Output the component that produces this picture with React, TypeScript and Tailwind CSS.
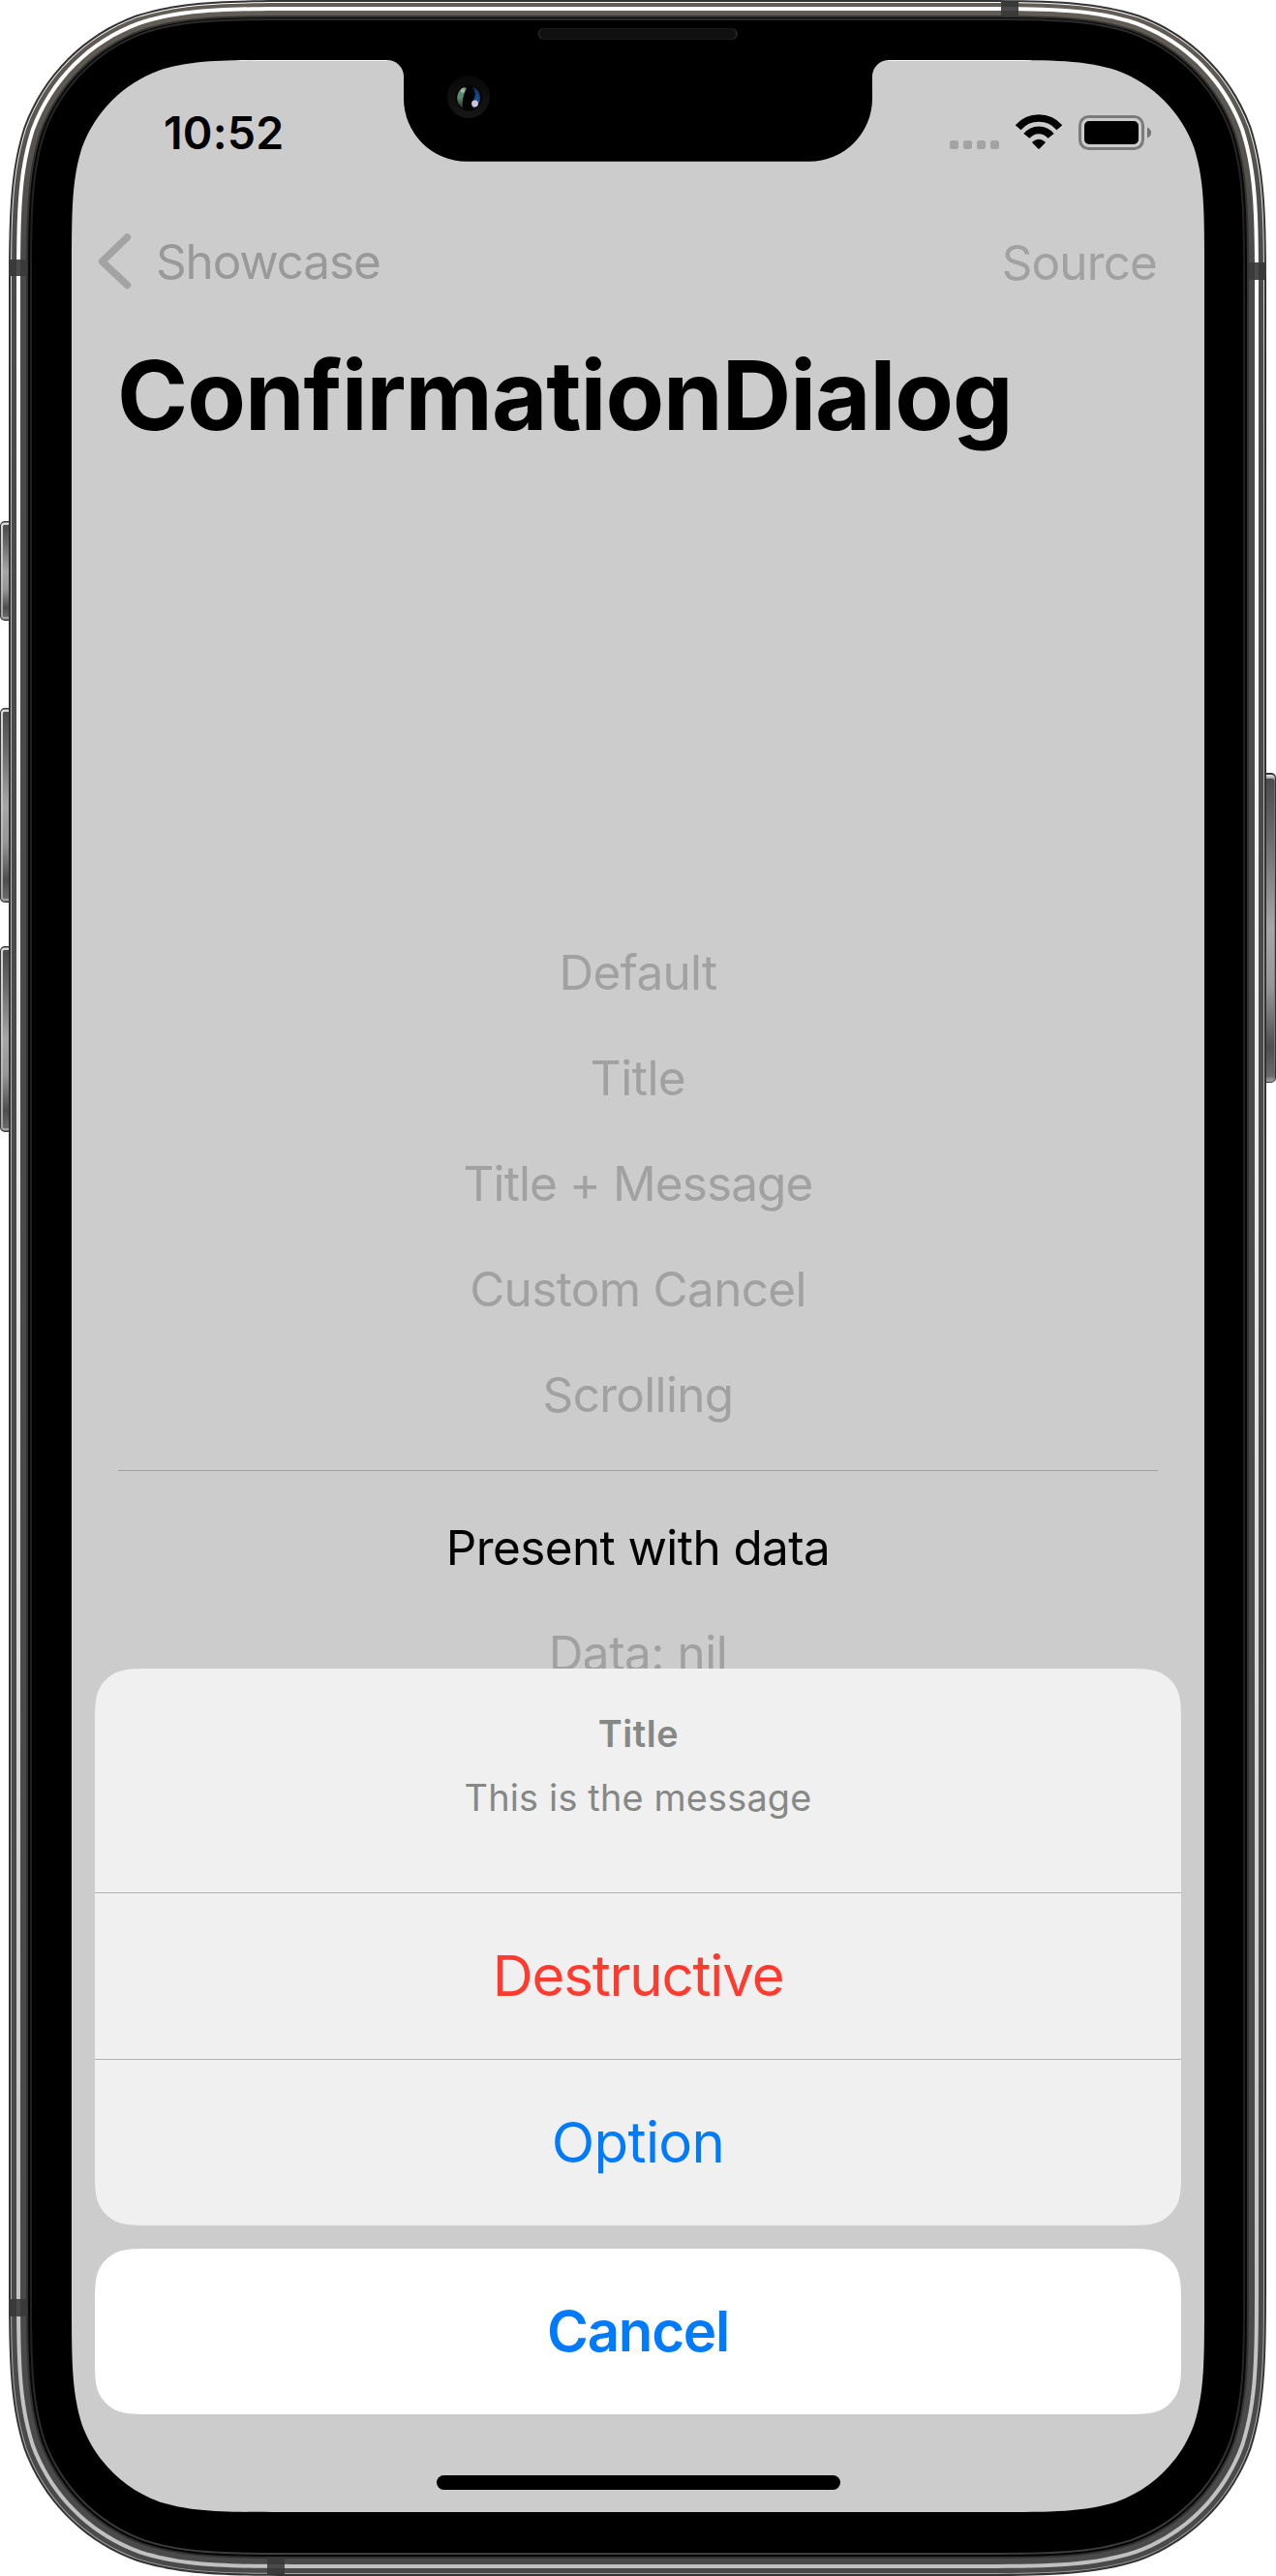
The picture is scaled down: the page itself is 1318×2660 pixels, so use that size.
import React from "react";

/** Rounded rectangle with continuous (iOS style) corners. */
function squircle(x: number, y: number, w: number, h: number, r: number): string {
  const R = x + w;
  const B = y + h;
  const k = [1.528665, 1.08849296, 0.86840694, 0.63149379, 0.37282383, 0.16905956, 0.07491139].map((v) => v * r);
  const [a, b, c, d, e, f, g] = k;
  return [
    `M${x + a} ${y}`,
    `L${R - a} ${y}`,
    `C${R - b} ${y} ${R - c} ${y} ${R - d} ${y + g}`,
    `C${R - e} ${y + f} ${R - f} ${y + e} ${R - g} ${y + d}`,
    `C${R} ${y + c} ${R} ${y + b} ${R} ${y + a}`,
    `L${R} ${B - a}`,
    `C${R} ${B - b} ${R} ${B - c} ${R - g} ${B - d}`,
    `C${R - f} ${B - e} ${R - e} ${B - f} ${R - d} ${B - g}`,
    `C${R - c} ${B} ${R - b} ${B} ${R - a} ${B}`,
    `L${x + a} ${B}`,
    `C${x + b} ${B} ${x + c} ${B} ${x + d} ${B - g}`,
    `C${x + e} ${B - f} ${x + f} ${B - e} ${x + g} ${B - d}`,
    `C${x} ${B - c} ${x} ${B - b} ${x} ${B - a}`,
    `L${x} ${y + a}`,
    `C${x} ${y + b} ${x} ${y + c} ${x + g} ${y + d}`,
    `C${x + f} ${y + e} ${x + e} ${y + f} ${x + d} ${y + g}`,
    `C${x + c} ${y} ${x + b} ${y} ${x + a} ${y}Z`,
  ].join(" ");
}

/** Metal bands from the outside in: side, top and bottom inset plus fill. */
const bands: [number, number, number, string][] = [
  [0, 0, 0, "#333333"],
  [2, 2, 2, "url(#rim)"],
  [3, 3, 3, "url(#metal)"],
  [8, 7, 8, "url(#shine)"],
  [12, 11, 12, "url(#metal)"],
  [18, 16, 18, "#333231"],
  [20, 18, 20, "#060606"],
  [22, 19, 22, "url(#lip)"],
  [24, 21, 24, "#000000"],
];

function Frame() {
  return (
    <svg className="absolute inset-0" width="1318" height="2660" viewBox="0 0 1318 2660" aria-hidden="true">
      <defs>
        <linearGradient id="metal" gradientUnits="userSpaceOnUse" x1="0" y1="0" x2="0" y2="2660">
          <stop offset="0" stopColor="#625d55" />
          <stop offset="0.04" stopColor="#5b5751" />
          <stop offset="0.1" stopColor="#4a4a4a" />
          <stop offset="1" stopColor="#4a4a4a" />
        </linearGradient>
        <linearGradient id="shine" gradientUnits="userSpaceOnUse" x1="0" y1="0" x2="0" y2="2660">
          <stop offset="0" stopColor="#ffffff" />
          <stop offset="0.15" stopColor="#fafafa" />
          <stop offset="0.45" stopColor="#e9e9e9" />
          <stop offset="0.88" stopColor="#c6c6c6" />
          <stop offset="1" stopColor="#c0c0c0" />
        </linearGradient>
        <linearGradient id="rim" gradientUnits="userSpaceOnUse" x1="0" y1="0" x2="0" y2="2660">
          <stop offset="0" stopColor="#ffffff" />
          <stop offset="0.1" stopColor="#d4d8d6" />
          <stop offset="0.2" stopColor="#b4b4b4" />
          <stop offset="1" stopColor="#a4a8a6" />
        </linearGradient>
        <linearGradient id="lip" gradientUnits="userSpaceOnUse" x1="0" y1="0" x2="0" y2="2660">
          <stop offset="0" stopColor="#2c2c2c" />
          <stop offset="0.1" stopColor="#1f1f1f" />
          <stop offset="0.9" stopColor="#1f1f1f" />
          <stop offset="1" stopColor="#404040" />
        </linearGradient>
        <linearGradient id="key" x1="0" y1="0" x2="0" y2="1">
          <stop offset="0" stopColor="#4c4c4c" />
          <stop offset="0.2" stopColor="#6a6a6a" />
          <stop offset="0.5" stopColor="#a6a6a6" />
          <stop offset="0.7" stopColor="#969696" />
          <stop offset="0.9" stopColor="#4e4e4e" />
          <stop offset="1" stopColor="#6a6a6a" />
        </linearGradient>
        <linearGradient id="keyEdge" x1="0" y1="0" x2="0" y2="1">
          <stop offset="0" stopColor="#d8d8d8" />
          <stop offset="0.5" stopColor="#c4c4c4" />
          <stop offset="1" stopColor="#a0a0a0" />
        </linearGradient>
        <linearGradient id="keyEdgeRight" x1="0" y1="0" x2="0" y2="1">
          <stop offset="0" stopColor="#ececec" />
          <stop offset="0.02" stopColor="#6c6c6c" />
          <stop offset="0.5" stopColor="#8c8c8c" />
          <stop offset="0.98" stopColor="#6c6c6c" />
          <stop offset="1" stopColor="#a0a0a0" />
        </linearGradient>
      </defs>

      {[[538, 103], [731, 201], [977, 192]].map(([y, h]) => (
        <g key={y}>
          <rect x="0" y={y} width="20" height={h} rx="5" fill="#3a3a3a" />
          <rect x="1" y={y + 1.5} width="20" height={h - 3} rx="4" fill="url(#keyEdge)" />
          <rect x="3" y={y + 4} width="20" height={h - 8} rx="1.5" fill="url(#key)" />
        </g>
      ))}
      <rect x="1298" y="798" width="20" height="320" rx="5" fill="#333333" />
      <rect x="1298" y="800" width="19" height="317" rx="4" fill="url(#keyEdgeRight)" />
      <rect x="1298" y="804" width="18" height="308" rx="2" fill="url(#key)" />

      {bands.map(([s, t, b, fill]) => (
        <path key={s} d={squircle(9 + s, t, 1299 - 2 * s, 2660 - t - b, 208 - s)} fill={fill} />
      ))}

      <g fill="#3a3a3a">
        <rect x="9" y="268" width="19" height="17" />
        <rect x="1290" y="271" width="17" height="18" />
        <rect x="1034" y="2" width="18" height="15" />
        <rect x="9" y="2374" width="19" height="18" />
        <rect x="276" y="2641" width="18" height="17" />
      </g>
      <g fill="#4a4a4a">
        <rect x="17" y="268" width="4" height="17" />
        <rect x="1296" y="271" width="4" height="18" />
        <rect x="1034" y="7" width="18" height="4" />
        <rect x="17" y="2374" width="4" height="18" />
        <rect x="276" y="2648" width="18" height="4" />
      </g>

      <rect x="555.5" y="29" width="206.5" height="12" rx="6" fill="#222222" />
      <rect x="557.5" y="29.5" width="202.5" height="11" rx="5.5" fill="#101010" />
    </svg>
  );
}

function Notch() {
  return (
    <svg className="absolute left-0 top-0" width="1170" height="106" viewBox="74 62 1170 106" aria-hidden="true">
      <defs>
        <linearGradient id="ring" x1="0" y1="0" x2="0" y2="1">
          <stop offset="0" stopColor="#080808" />
          <stop offset="1" stopColor="#161616" />
        </linearGradient>
        <linearGradient id="green" x1="0" y1="0" x2="0" y2="1">
          <stop offset="0" stopColor="#5f8a76" />
          <stop offset="0.5" stopColor="#5c8a70" />
          <stop offset="1" stopColor="#1c2c24" />
        </linearGradient>
        <linearGradient id="blue" x1="0" y1="0" x2="0" y2="1">
          <stop offset="0" stopColor="#12305c" />
          <stop offset="0.6" stopColor="#1a4f92" />
          <stop offset="1" stopColor="#1c3c78" />
        </linearGradient>
      </defs>
      <path d="M247 62H400M917 62H1065" stroke="#ffffff" strokeWidth="1.6" />
      <path
        d="M400 62A17 17 0 0 1 417 79V101.700A65 65 0 0 0 482 166.700H836A65 65 0 0 0 901 101.700V79A17 17 0 0 1 918 62Z"
        fill="#000000"
      />
      <circle cx="484" cy="100" r="22" fill="url(#ring)" />
      <circle cx="484.300" cy="101" r="13.600" fill="#030303" />
      <path d="M479 90A12.500 12.500 0 0 0 478 111.700Q476.500 101 482 91Z" fill="url(#green)" />
      <path d="M488 89.500A12.500 12.500 0 0 1 489.500 112Q486 109 489 104Q493 97 488 89.500Z" fill="url(#blue)" />
      <circle cx="484" cy="101" r="4.500" fill="#000000" />
      <circle cx="478" cy="93.500" r="2.200" fill="#a4b8ae" />
      <circle cx="490.500" cy="107" r="3.400" fill="#ccc4dc" />
    </svg>
  );
}

function StatusBar() {
  return (
    <div className="flex h-[141px] items-start justify-between pl-[95px] pr-[54px] pt-[45px]">
      <time className="text-[46.5px] font-semibold leading-[60px] tracking-[0.2px]">10:52</time>
      <div className="mt-[10px] flex items-end gap-4">
        <div className="mb-px flex gap-[5px]">
          <i className="size-[9px] rounded-[2.5px] bg-[#a3a3a3]" />
          <i className="size-[9px] rounded-[2.5px] bg-[#a3a3a3]" />
          <i className="size-[9px] rounded-[2.5px] bg-[#a3a3a3]" />
          <i className="size-[9px] rounded-[2.5px] bg-[#a3a3a3]" />
        </div>
        <svg width="50" height="38" viewBox="54 51 150 114" aria-hidden="true">
          <path d="M64.900 95.200A85 85 0 0 1 193.100 95.200" fill="none" stroke="#000" strokeWidth="23" />
          <path d="M91.200 121.400A48 48 0 0 1 166.800 121.400" fill="none" stroke="#000" strokeWidth="23" />
          <path d="M129 159.500L110.500 141Q129 125 147.500 141Z" fill="#000" stroke="#000" strokeWidth="4" strokeLinejoin="round" />
        </svg>
        <svg width="76" height="36" viewBox="0 0 76 36" aria-hidden="true">
          <rect x="1.500" y="1.500" width="65" height="33" rx="9" fill="none" stroke="#7b7b7b" strokeWidth="3" />
          <rect x="6" y="6" width="56" height="24" rx="5" fill="#000" />
          <path d="M71 12.500Q75 14.500 75 18T71 23.500Z" fill="#747474" />
        </svg>
      </div>
    </div>
  );
}

function NavBar() {
  return (
    <nav className="flex h-[132px] items-center justify-between pl-[27px] pr-[49px] pt-[2px] text-[49.4px] leading-[60px]">
      <button className="flex items-center">
        <svg width="36" height="60" viewBox="0 0 36 60" aria-hidden="true">
          <path d="M30.500 5L4.500 30L30.500 54.500" fill="none" stroke="#a3a3a3" strokeWidth="7.400" strokeLinecap="round" strokeLinejoin="round" />
        </svg>
        <span className="ml-6 tracking-[-1.1px] text-[#999999]">Showcase</span>
      </button>
      <button className="mt-[2px] tracking-[-0.84px] text-[#a1a1a1]">Source</button>
    </nav>
  );
}

function Sheet() {
  return (
    <div className="absolute inset-x-6 bottom-[101px] flex flex-col gap-6 text-center">
      <section className="flex flex-col bg-[#f0f0f0]" style={{ clipPath: `path("${squircle(0, 0, 1122, 575, 39)}")` }}>
        <header className="h-[231px] pt-[43px] text-[37.8px] leading-[48px] text-[#868886]">
          <h2 className="pl-px font-semibold tracking-[0.6px]">Title</h2>
          <p className="mt-[18px] tracking-[0.2px]">This is the message</p>
        </header>
        <button className="h-[172px] border-t border-[#b1b1b3] pt-px text-[58.2px] tracking-[-1.19px] text-[#ff3b30]">Destructive</button>
        <button className="h-[172px] border-t border-[#b1b1b3] pt-px text-[58.2px] tracking-[-0.63px] text-[#007aff]">Option</button>
      </section>
      <button
        className="h-[171px] bg-white text-[58.2px] font-semibold tracking-[-1.24px] text-[#007aff]"
        style={{ clipPath: `path("${squircle(0, 0, 1122, 171, 39)}")` }}
      >
        Cancel
      </button>
    </div>
  );
}

export default function App() {
  return (
    <div className="relative h-[2660px] w-[1318px] overflow-hidden bg-white pl-[74px] pt-[62px] font-['Inter',sans-serif] text-black">
      <Frame />
      <div
        className="relative h-[2532px] w-[1170px] bg-[#cccccc]"
        style={{ clipPath: `path("${squircle(0, 0, 1170, 2532, 143)}")` }}
      >
        <StatusBar />
        <NavBar />
        <h1 className="mt-[13px] pl-[47px] text-[99px] font-bold leading-[120px] tracking-[-1.02px]">ConfirmationDialog</h1>
        <main className="mt-[506px] flex flex-col px-12 text-center text-[49.4px] leading-[60px]">
          <div className="flex flex-col items-center gap-[49px] text-[#a1a1a1]">
            <button className="tracking-[-0.65px]">Default</button>
            <button className="tracking-[-0.49px]">Title</button>
            <button className="tracking-[-0.84px]">Title + Message</button>
            <button className="tracking-[-0.62px]">Custom Cancel</button>
            <button className="tracking-[-0.65px]">Scrolling</button>
          </div>
          <hr className="mt-12 border-t border-[#a0a0a1]" />
          <p className="mt-[49px] tracking-[-0.55px]">Present with data</p>
          <button className="mt-[49px] tracking-[-0.45px] text-[#a1a1a1]">Data: nil</button>
        </main>
        <Notch />
        <Sheet />
        <div className="absolute bottom-[23px] left-[377px] h-[15px] w-[417px] rounded-full bg-black" />
      </div>
    </div>
  );
}
